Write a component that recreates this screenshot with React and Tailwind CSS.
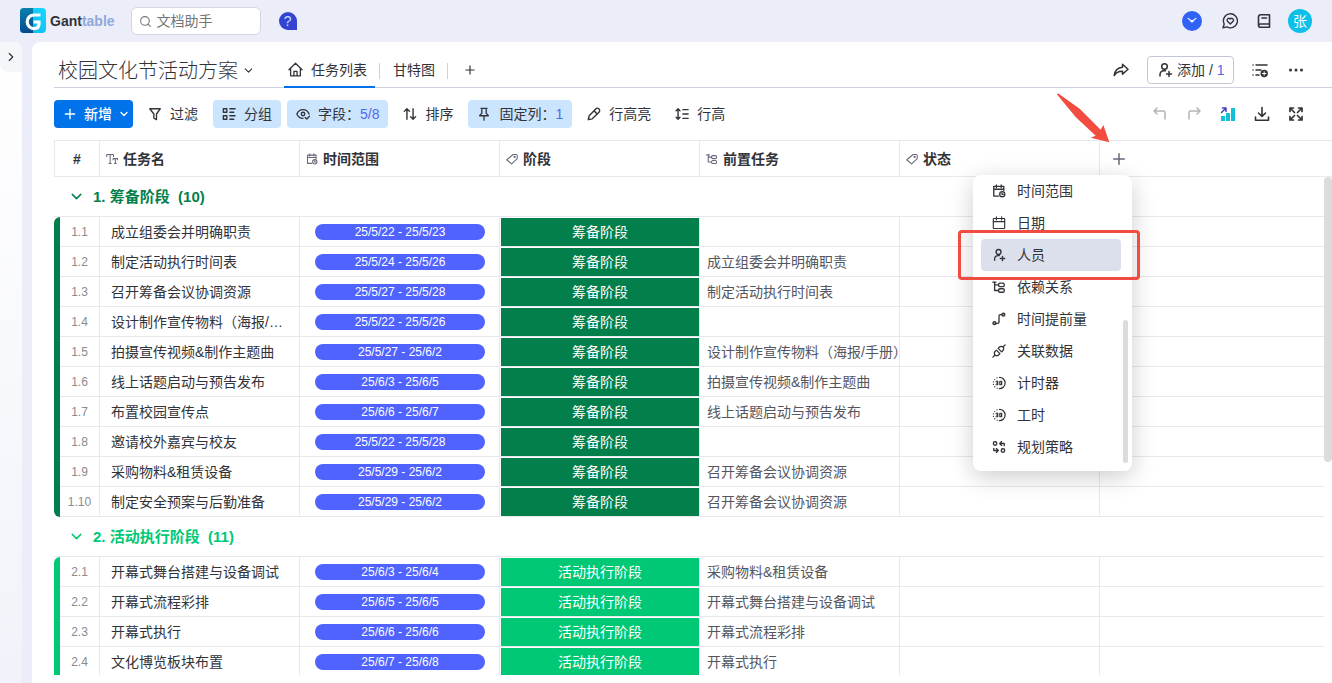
import React, { useState } from "react";
import { ChevronDown, ChevronRight, Plus, Search } from "lucide-react";

const phase1 = [
  ["1.1", "成立组委会并明确职责", "25/5/22 - 25/5/23", ""],
  ["1.2", "制定活动执行时间表", "25/5/24 - 25/5/26", "成立组委会并明确职责"],
  ["1.3", "召开筹备会议协调资源", "25/5/27 - 25/5/28", "制定活动执行时间表"],
  ["1.4", "设计制作宣传物料（海报/手册）", "25/5/22 - 25/5/26", ""],
  ["1.5", "拍摄宣传视频&制作主题曲", "25/5/27 - 25/6/2", "设计制作宣传物料（海报/手册）"],
  ["1.6", "线上话题启动与预告发布", "25/6/3 - 25/6/5", "拍摄宣传视频&制作主题曲"],
  ["1.7", "布置校园宣传点", "25/6/6 - 25/6/7", "线上话题启动与预告发布"],
  ["1.8", "邀请校外嘉宾与校友", "25/5/22 - 25/5/28", ""],
  ["1.9", "采购物料&租赁设备", "25/5/29 - 25/6/2", "召开筹备会议协调资源"],
  ["1.10", "制定安全预案与后勤准备", "25/5/29 - 25/6/2", "召开筹备会议协调资源"],
];

const phase2 = [
  ["2.1", "开幕式舞台搭建与设备调试", "25/6/3 - 25/6/4", "采购物料&租赁设备"],
  ["2.2", "开幕式流程彩排", "25/6/5 - 25/6/5", "开幕式舞台搭建与设备调试"],
  ["2.3", "开幕式执行", "25/6/6 - 25/6/6", "开幕式流程彩排"],
  ["2.4", "文化博览板块布置", "25/6/7 - 25/6/8", "开幕式执行"],
];

const groups = [
  { no: "1.", name: "筹备阶段", count: 10, rows: phase1, bg: "bg-[#037f4c]", text: "text-[#037f4c]" },
  { no: "2.", name: "活动执行阶段", count: 11, rows: phase2, bg: "bg-[#00c875]", text: "text-[#00c875]" },
];

// small stroke icon on a 16x16 grid
const Icon = ({ size = 16, width = 1.3, className = "", children }) => (
  <svg
    width={size}
    height={size}
    viewBox="0 0 16 16"
    fill="none"
    stroke="currentColor"
    strokeWidth={width}
    strokeLinecap="round"
    strokeLinejoin="round"
    className={"shrink-0 " + className}
    aria-hidden="true"
  >
    {children}
  </svg>
);

const PersonAdd = (props) => (
  <Icon {...props}>
    <circle cx="7.5" cy="4.5" r="2.8" />
    <path d="M3 14v-1.500a3.800 3.800 0 0 1 3.800-3.800H8.500M12 9.500v5M9.500 12h5" />
  </Icon>
);

const CalendarRange = (props) => (
  <Icon {...props}>
    <path d="M13.500 7.500V2.800H2v11h5.500M2 6h11.500M5 1v3M10.500 1v3" />
    <circle cx="11.700" cy="11.700" r="2.900" />
    <path d="M11.500 10.300v1.600h1.200" />
  </Icon>
);

const Tree = (props) => (
  <Icon {...props}>
    <path d="M1 2.500h3.500M3 2.500V12h4.500M3 5.500h4.500" />
    <rect x="7.500" y="3.500" width="6.500" height="4" rx="1.500" />
    <rect x="7.500" y="10" width="6.500" height="4" rx="1.500" />
  </Icon>
);

const Tag = (props) => (
  <Icon {...props}>
    <path d="M9.500 2h4.500l1 1v4.500L7.500 14.500 1 9z" />
    <circle cx="11.500" cy="5.300" r="0.800" />
  </Icon>
);

const TextType = (props) => (
  <Icon {...props}>
    <path d="M1 4.500V2h9v2.500M5.500 2v12M4 14h3M9.500 9V7.500h6V9M12.500 7.500V14M11.300 14h2.400" />
  </Icon>
);

const Timer = (props) => (
  <Icon {...props}>
    <path d="M8.500 1.500a6.500 6.500 0 0 1 0 13" />
    <path d="M5.800 2.100l-.1.100M3.100 4v.1M1.600 6.700v.1M1.600 9.600v.1M3.100 12.200v.1M5.800 13.900v.1" />
    <path d="M4.500 6h2v4h-2M5 8h1.500M9 6h2v4H9z" />
  </Icon>
);

const menuItems = [
  { label: "时间范围", icon: <CalendarRange size={14} width={1.5} /> },
  {
    label: "日期",
    icon: (
      <Icon size={14}>
        <rect x="1.500" y="2.800" width="13" height="11.500" rx="0.500" />
        <path d="M1.500 6.500h13M5 1v3.500M11 1v3.500" />
      </Icon>
    ),
  },
  { label: "人员", icon: <PersonAdd size={14} width={1.5} />, active: true },
  { label: "依赖关系", icon: <Tree size={14} width={1.5} /> },
  {
    label: "时间提前量",
    icon: (
      <Icon size={14} width={1.5}>
        <circle cx="2.800" cy="12.800" r="1.700" fill="currentColor" fillOpacity="0.5" />
        <circle cx="13" cy="3" r="1.700" fill="currentColor" fillOpacity="0.5" />
        <path d="M4.500 13h2A1.500 1.500 0 0 0 8 11.500v-7A1.500 1.500 0 0 1 9.500 3H11" />
      </Icon>
    ),
  },
  {
    label: "关联数据",
    icon: (
      <Icon size={14} width={1.5}>
        <path d="M1 15l2.500-2.500M12.500 3.500L15 1M3.500 12.500a2.800 2.800 0 0 1 0-4L5 7l4 4-1.500 1.500a2.800 2.800 0 0 1-4 0zM12.500 3.500a2.800 2.800 0 0 1 0 4L11 9 7 5l1.500-1.500a2.800 2.800 0 0 1 4 0z" />
      </Icon>
    ),
  },
  { label: "计时器", icon: <Timer size={14} width={1.4} /> },
  { label: "工时", icon: <Timer size={14} width={1.4} /> },
  {
    label: "规划策略",
    icon: (
      <Icon size={14} width={1.5}>
        <circle cx="3.500" cy="4" r="2" />
        <circle cx="12.500" cy="12" r="2" />
        <path d="M14 6.500V4H9M11 1.800L8.800 4 11 6.200M2 9.500V12h5M5 9.800L7.200 12 5 14.200" />
      </Icon>
    ),
  },
];

const columns = [
  { label: "任务名", icon: <TextType size={12} width={1.4} /> },
  { label: "时间范围", icon: <CalendarRange size={12} width={1.4} /> },
  { label: "阶段", icon: <Tag size={12} width={1.4} /> },
  { label: "前置任务", icon: <Tree size={12} width={1.4} /> },
  { label: "状态", icon: <Tag size={12} width={1.4} /> },
];

const ToolButton = ({ icon, children, on }) => (
  <button
    className={
      "flex h-7 items-center gap-2 rounded px-[9px] whitespace-nowrap " +
      (on ? "bg-[#cce5ff]" : "bg-white")
    }
  >
    {icon}
    <span>{children}</span>
  </button>
);

const TopBar = () => (
  <header className="flex h-[42px] shrink-0 items-center px-5">
    <a href="#" className="flex items-center gap-1 text-sm font-bold">
      <svg width="26" height="26" viewBox="0 0 26 26" aria-hidden="true">
        <defs>
          <linearGradient id="logoLeft" x1="0" y1="0" x2="0" y2="1">
            <stop offset="0" stopColor="#0b7fae" />
            <stop offset="1" stopColor="#034a8c" />
          </linearGradient>
          <linearGradient id="logoRight" x1="1" y1="0" x2="0" y2="1">
            <stop offset="0" stopColor="#17d8ff" />
            <stop offset="1" stopColor="#0cb4ec" />
          </linearGradient>
        </defs>
        <rect width="26" height="25" rx="4" fill="url(#logoRight)" />
        <path d="M4 0h9v25H4a4 4 0 0 1-4-4V4a4 4 0 0 1 4-4z" fill="url(#logoLeft)" />
        <path
          d="M20.500 7H14a6.800 6.800 0 0 0 0 13.600c3.500 0 5-1.300 5-4.600v-2h-5.500"
          fill="none"
          stroke="#fff"
          strokeWidth="3.200"
        />
      </svg>
      <span className="text-[#323338]">
        Gant<span className="text-[#8fa8dc]">table</span>
      </span>
    </a>
    <label className="ml-4 flex h-7 w-[130px] items-center rounded-md border border-[#d5d7de] bg-white px-[7px] text-[#777]">
      <Search size={13} strokeWidth={2} className="shrink-0" />
      <input
        type="text"
        placeholder="文档助手"
        aria-label="文档助手"
        className="w-full min-w-0 pl-[5px] text-sm outline-none placeholder:text-[#757575]"
      />
    </label>
    <button className="ml-[18px] h-[18px] w-[18px] rounded-full rounded-br-none bg-[#3543d0] text-sm leading-[18px] text-[#b9e2ff]">
      ?
    </button>
    <div className="ml-auto flex items-center">
      <button aria-label="通知" className="flex h-5 w-5 items-center justify-center rounded-full bg-[#2f62f5] text-white">
        <Icon size={14} width={1.3}>
          <path d="M3.500 5L8 8.500 12.500 5" />
          <path d="M6.300 7.500h3.400L8 9.300z" fill="currentColor" />
        </Icon>
      </button>
      <button aria-label="反馈" className="ml-5">
        <Icon width={1.4}>
          <path d="M2.200 11A7 7 0 1 1 5 13.900L1 14.800z" />
          <path d="M8.300 11L5.500 8.200A1.700 1.700 0 0 1 8.300 6a1.700 1.700 0 0 1 2.800 2.200z" />
        </Icon>
      </button>
      <button aria-label="文档" className="ml-[18px]">
        <Icon width={1.6}>
          <path d="M13.500 11V1.800h-9a2 2 0 0 0-2 2v8.400a2 2 0 0 0 2 2h9V11h-9a2 2 0 0 0-2 1.500M6 5h4.500" />
        </Icon>
      </button>
      <button className="ml-4 h-6 w-6 rounded-full bg-[#0dbfe9] text-sm leading-6 text-white">张</button>
    </div>
  </header>
);

const TitleBar = () => (
  <div className="ml-[22px] flex h-[46px] items-center border-b border-[#d0d1de] pr-7">
    <button className="flex items-center gap-1 pt-3 pl-1 text-xl leading-7 whitespace-nowrap">
      <h1 className="font-light">校园文化节活动方案</h1>
      <ChevronDown size={13} strokeWidth={2} />
    </button>
    <nav className="ml-[29px] flex h-[46px] items-end">
      <a href="#" className="flex h-[34px] items-center gap-2 border-b-2 border-[#0073ea] px-1 text-sm">
        <Icon size={15} width={1.4}>
          <path d="M1 8.200L8 1.300l7 6.900M2.800 7v7.700h10.400V7M6.300 14.500V10h3.400v4.500" />
        </Icon>
        <span className="pr-1">任务列表</span>
      </a>
      <span className="mb-[9px] ml-1 h-4 w-px bg-[#d0d1de]" />
      <a href="#" className="ml-[13px] flex h-[34px] items-center pb-[2px] text-sm">
        甘特图
      </a>
      <span className="mb-[9px] ml-3 h-4 w-px bg-[#d0d1de]" />
      <button aria-label="添加视图" className="ml-[15px] flex h-[34px] items-center pb-[2px]">
        <Plus size={14} strokeWidth={2} />
      </button>
    </nav>
    <div className="ml-auto flex items-center gap-[18px] pt-2.5">
      <button aria-label="分享">
        <Icon width={1.5}>
          <path d="M9.500 2.200l5.500 5-5.500 5V9.300C5.500 9.200 3 10.500 1.200 13.500 1.700 8.800 4.500 5.700 9.500 5.200z" />
        </Icon>
      </button>
      <button className="flex h-7 w-[87px] items-center gap-1 rounded border border-[#c3c6d4] pl-[9px] text-sm whitespace-nowrap">
        <PersonAdd size={16} width={1.5} />
        <span>
          添加 / <span className="text-[#4f69e8]">1</span>
        </span>
      </button>
      <button aria-label="列表设置">
        <Icon width={1.5}>
          <path d="M1 3h.1M1 8h.1M1 13h.1M4 3h11M4 8h5M4 13h3" />
          <circle cx="12.200" cy="11.500" r="3.700" fill="currentColor" stroke="none" />
          <path d="M12.200 9.800v3.400M10.500 11.500h3.400" stroke="#fff" strokeWidth="1" />
        </Icon>
      </button>
      <button aria-label="更多" className="ml-[2px]">
        <Icon>
          <g fill="currentColor" stroke="none">
            <circle cx="2.500" cy="8" r="1.500" />
            <circle cx="8" cy="8" r="1.500" />
            <circle cx="13.500" cy="8" r="1.500" />
          </g>
        </Icon>
      </button>
    </div>
  </div>
);

const Toolbar = () => (
  <div className="flex h-[52px] items-center gap-1.5 pr-7 pl-[22px] text-sm">
    <button className="flex h-7 w-[79px] items-center rounded bg-[#0073ea] pl-2 whitespace-nowrap text-white">
      <Plus size={16} strokeWidth={2} />
      <span className="ml-1.5 font-medium">新增</span>
      <ChevronDown size={12} strokeWidth={2.5} className="ml-1.5" />
    </button>
    <ToolButton
      icon={
        <Icon size={14} width={1.5}>
          <path d="M2 2h12L9.700 8v6.500l-3-1.700V8z" />
        </Icon>
      }
    >
      过滤
    </ToolButton>
    <ToolButton
      on
      icon={
        <Icon size={14} width={1.5}>
          <path d="M1.500 2h4v4h-4zM1.500 10h4v4h-4zM9 2h6M9 6h4.500M9 10h6M9 14h4.500" />
        </Icon>
      }
    >
      分组
    </ToolButton>
    <ToolButton
      on
      icon={
        <Icon size={14} width={1.5}>
          <path d="M8 13C4.500 13 2 10.500 1 8c1-2.500 3.500-5 7-5s6 2.500 7 5M10.500 12l1.800 1.800 3.200-3.300" />
          <circle cx="8" cy="8" r="2" />
        </Icon>
      }
    >
      字段：<span className="text-[#4f69e8]">5/8</span>
    </ToolButton>
    <ToolButton
      icon={
        <Icon size={14} width={1.6}>
          <path d="M4.500 14V2M1.500 5l3-3 3 3M11.500 2v12M8.500 11l3 3 3-3" />
        </Icon>
      }
    >
      排序
    </ToolButton>
    <ToolButton
      on
      icon={
        <Icon size={14} width={1.5}>
          <path d="M4.500 1.500h7M5.500 1.500V7L3 10h10l-2.500-3V1.500M8 10v5" />
        </Icon>
      }
    >
      固定列：<span className="text-[#4f69e8]">1</span>
    </ToolButton>
    <ToolButton
      icon={
        <Icon size={14} width={1.6}>
          <path d="M1.500 14.500l1-4.500L10 2.200a2.500 2.500 0 0 1 3.700 3.700L6 13.500zM8.300 4.500L11.500 8" />
        </Icon>
      }
    >
      行高亮
    </ToolButton>
    <ToolButton
      icon={
        <Icon size={14} width={1.6}>
          <path d="M3.500 2v12M1.300 4.200L3.500 2l2.200 2.200M1.300 11.800L3.500 14l2.200-2.200M9 3h6M9 8h6M9 13h6" />
        </Icon>
      }
    >
      行高
    </ToolButton>
    <div className="ml-auto flex items-center gap-[18px]">
      <button aria-label="撤销" className="text-[#b4b4b8]">
        <Icon width={1.5}>
          <path d="M5 2L2 5l3 3M2 5h9.500a1.500 1.500 0 0 1 1.500 1.500V13" />
        </Icon>
      </button>
      <button aria-label="重做" className="text-[#b4b4b8]">
        <Icon width={1.5}>
          <path d="M11 2l3 3-3 3M14 5H4.500A1.500 1.500 0 0 0 3 6.500V13" />
        </Icon>
      </button>
      <button aria-label="统计">
        <Icon>
          <path d="M1 10h4v5H1zM6 7h4v8H6zM11 2h4v13h-4z" fill="#0fc0d8" stroke="none" />
          <path d="M1.500 6.500l4-4M2.500 2H6v3.500" stroke="#3f3fc0" strokeWidth="1.5" />
        </Icon>
      </button>
      <button aria-label="下载">
        <Icon width={1.6}>
          <path d="M8 1.500V10M4.500 7L8 10.500 11.500 7M1.500 11v3.200h13V11" />
        </Icon>
      </button>
      <button aria-label="全屏">
        <Icon width={1.7}>
          <path d="M2 5.500V2h3.500M10.500 2H14v3.500M14 10.500V14h-3.500M5.500 14H2v-3.500M2 2l4.500 4.500M14 2L9.500 6.500M14 14L9.500 9.500M2 14l4.500-4.500" />
        </Icon>
      </button>
    </div>
  </div>
);

const TaskGroup = ({ group, open, onToggle }) => (
  <tbody>
    <tr>
      <td colSpan={8} className="h-10 border-b border-[#e8e8ef] p-0">
        <button
          onClick={onToggle}
          className={"flex items-center gap-2 pl-[14px] text-[15px] leading-5 font-bold " + group.text}
        >
          <ChevronDown size={17} strokeWidth={2} className={open ? "" : "-rotate-90"} />
          <span className="whitespace-pre">
            {group.no} {group.name}{"  "}({group.count})
          </span>
        </button>
      </td>
    </tr>
    {open &&
      group.rows.map(([id, name, range, before], i) => (
        <tr key={id} className="h-[30px] leading-5 whitespace-nowrap">
          <td
            className={
              "p-0 " +
              group.bg +
              (i === 0 ? " rounded-tl-md" : "") +
              (i === group.count - 1 ? " rounded-bl-md" : "")
            }
          />
          <td className="border-r border-b border-[#e8e8ef] p-0 text-center text-xs text-[#8a8a90]">{id}</td>
          <td className="truncate border-r border-b border-[#e8e8ef] py-0 pr-2.5 pl-[11px]">{name}</td>
          <td className="border-r border-b border-[#e8e8ef] py-0 pr-[14px] pl-[15px]">
            <div className="h-4 rounded-full bg-[#5063ff] text-center text-xs leading-4 text-white">{range}</div>
          </td>
          <td className="border-r border-b border-[#e8e8ef] pt-px pr-0 pb-0 pl-px">
            <div className={"h-7 text-center leading-7 text-white " + group.bg}>{group.name}</div>
          </td>
          <td className="border-r border-b border-[#e8e8ef] py-0 pr-0 pl-[7px] text-[#55565e]">{before}</td>
          <td className="border-r border-b border-[#e8e8ef] p-0" />
          <td className="border-b border-[#e8e8ef] p-0" />
        </tr>
      ))}
  </tbody>
);

const FieldMenu = () => (
  <div className="absolute top-[133px] left-[941px] flex w-[159px] rounded-lg bg-white pr-1 pb-2 pl-2 shadow-[0_6px_24px_rgba(0,0,0,0.2)]">
    <ul className="w-[140px]">
      {menuItems.map((item) => (
        <li key={item.label}>
          <button
            className={
              "flex h-8 w-full items-center gap-[11px] rounded pl-[11px] text-sm whitespace-nowrap " +
              (item.active ? "bg-[#dcdfec]" : "")
            }
          >
            {item.icon}
            {item.label}
          </button>
        </li>
      ))}
    </ul>
    <div className="ml-auto h-[143px] w-[5px] self-end rounded-full bg-[#dcdcdc]" />
  </div>
);

const App = () => {
  const [closed, setClosed] = useState({});

  return (
    <div className="flex h-screen flex-col overflow-hidden bg-[#ebeef8] font-['Liberation_Sans','Noto_Sans_CJK_SC',sans-serif] text-[#323338]">
      <TopBar />
      <div className="flex min-h-0 flex-1">
        <aside className="mr-2.5 w-[22px] shrink-0 rounded-tr-lg bg-linear-to-b from-white to-[#f1f3fa]">
          <button
            aria-label="展开侧栏"
            className="flex h-[30px] w-full items-center justify-center rounded-tr-lg rounded-bl-lg bg-[#f5f6fa]"
          >
            <ChevronRight size={14} strokeWidth={2} />
          </button>
        </aside>
        <main className="relative flex min-w-0 flex-1 flex-col rounded-tl-lg bg-white pb-2">
          <TitleBar />
          <Toolbar />
          <div className="relative ml-[22px] min-h-0 flex-1 overflow-hidden">
            <table className="w-full table-fixed border-separate border-spacing-0 text-sm">
              <colgroup>
                <col className="w-1.5" />
                <col className="w-10" />
                <col className="w-[200px]" />
                <col className="w-[200px]" />
                <col className="w-[200px]" />
                <col className="w-[200px]" />
                <col className="w-[200px]" />
                <col />
              </colgroup>
              <thead>
                <tr className="h-[37px] text-left">
                  <th colSpan={2} className="border border-[#e8e8ef] p-0 text-center">
                    #
                  </th>
                  {columns.map((col) => (
                    <th key={col.label} className="border-y border-r border-[#e8e8ef] px-1.5 py-0">
                      <span className="flex items-center gap-[5px]">
                        <span className="text-[#676879]">{col.icon}</span>
                        {col.label}
                      </span>
                    </th>
                  ))}
                  <th className="border-y border-[#e8e8ef] p-0">
                    <button aria-label="添加字段" className="ml-2.5 flex text-[#676879]">
                      <Plus size={18} strokeWidth={2} />
                    </button>
                  </th>
                </tr>
              </thead>
              {groups.map((group, i) => (
                <TaskGroup
                  key={group.name}
                  group={group}
                  open={!closed[i]}
                  onToggle={() => setClosed((prev) => ({ ...prev, [i]: !prev[i] }))}
                />
              ))}
            </table>
            {/* Scrollbar */}
            <div className="absolute top-[37px] right-0 bottom-0 w-2 bg-white">
              <div className="h-[285px] rounded-full bg-[#dcdcdc]" />
            </div>
          </div>

          <FieldMenu />

          {/* Highlight box and arrow */}
          <div className="pointer-events-none absolute top-[188px] left-[926px] h-[50px] w-[182px] rounded-sm border-3 border-[#f24b3f]" />
          <svg
            width="54"
            height="50"
            viewBox="48 39 162 150"
            className="pointer-events-none absolute top-[51px] left-[1024px]"
            aria-hidden="true"
          >
            <path d="M50 42l6-1 64 46 62 62 8-14 18 52-56-14 15-6-60-56z" fill="#f24b3f" />
          </svg>
        </main>
      </div>
    </div>
  );
};

export default App;
